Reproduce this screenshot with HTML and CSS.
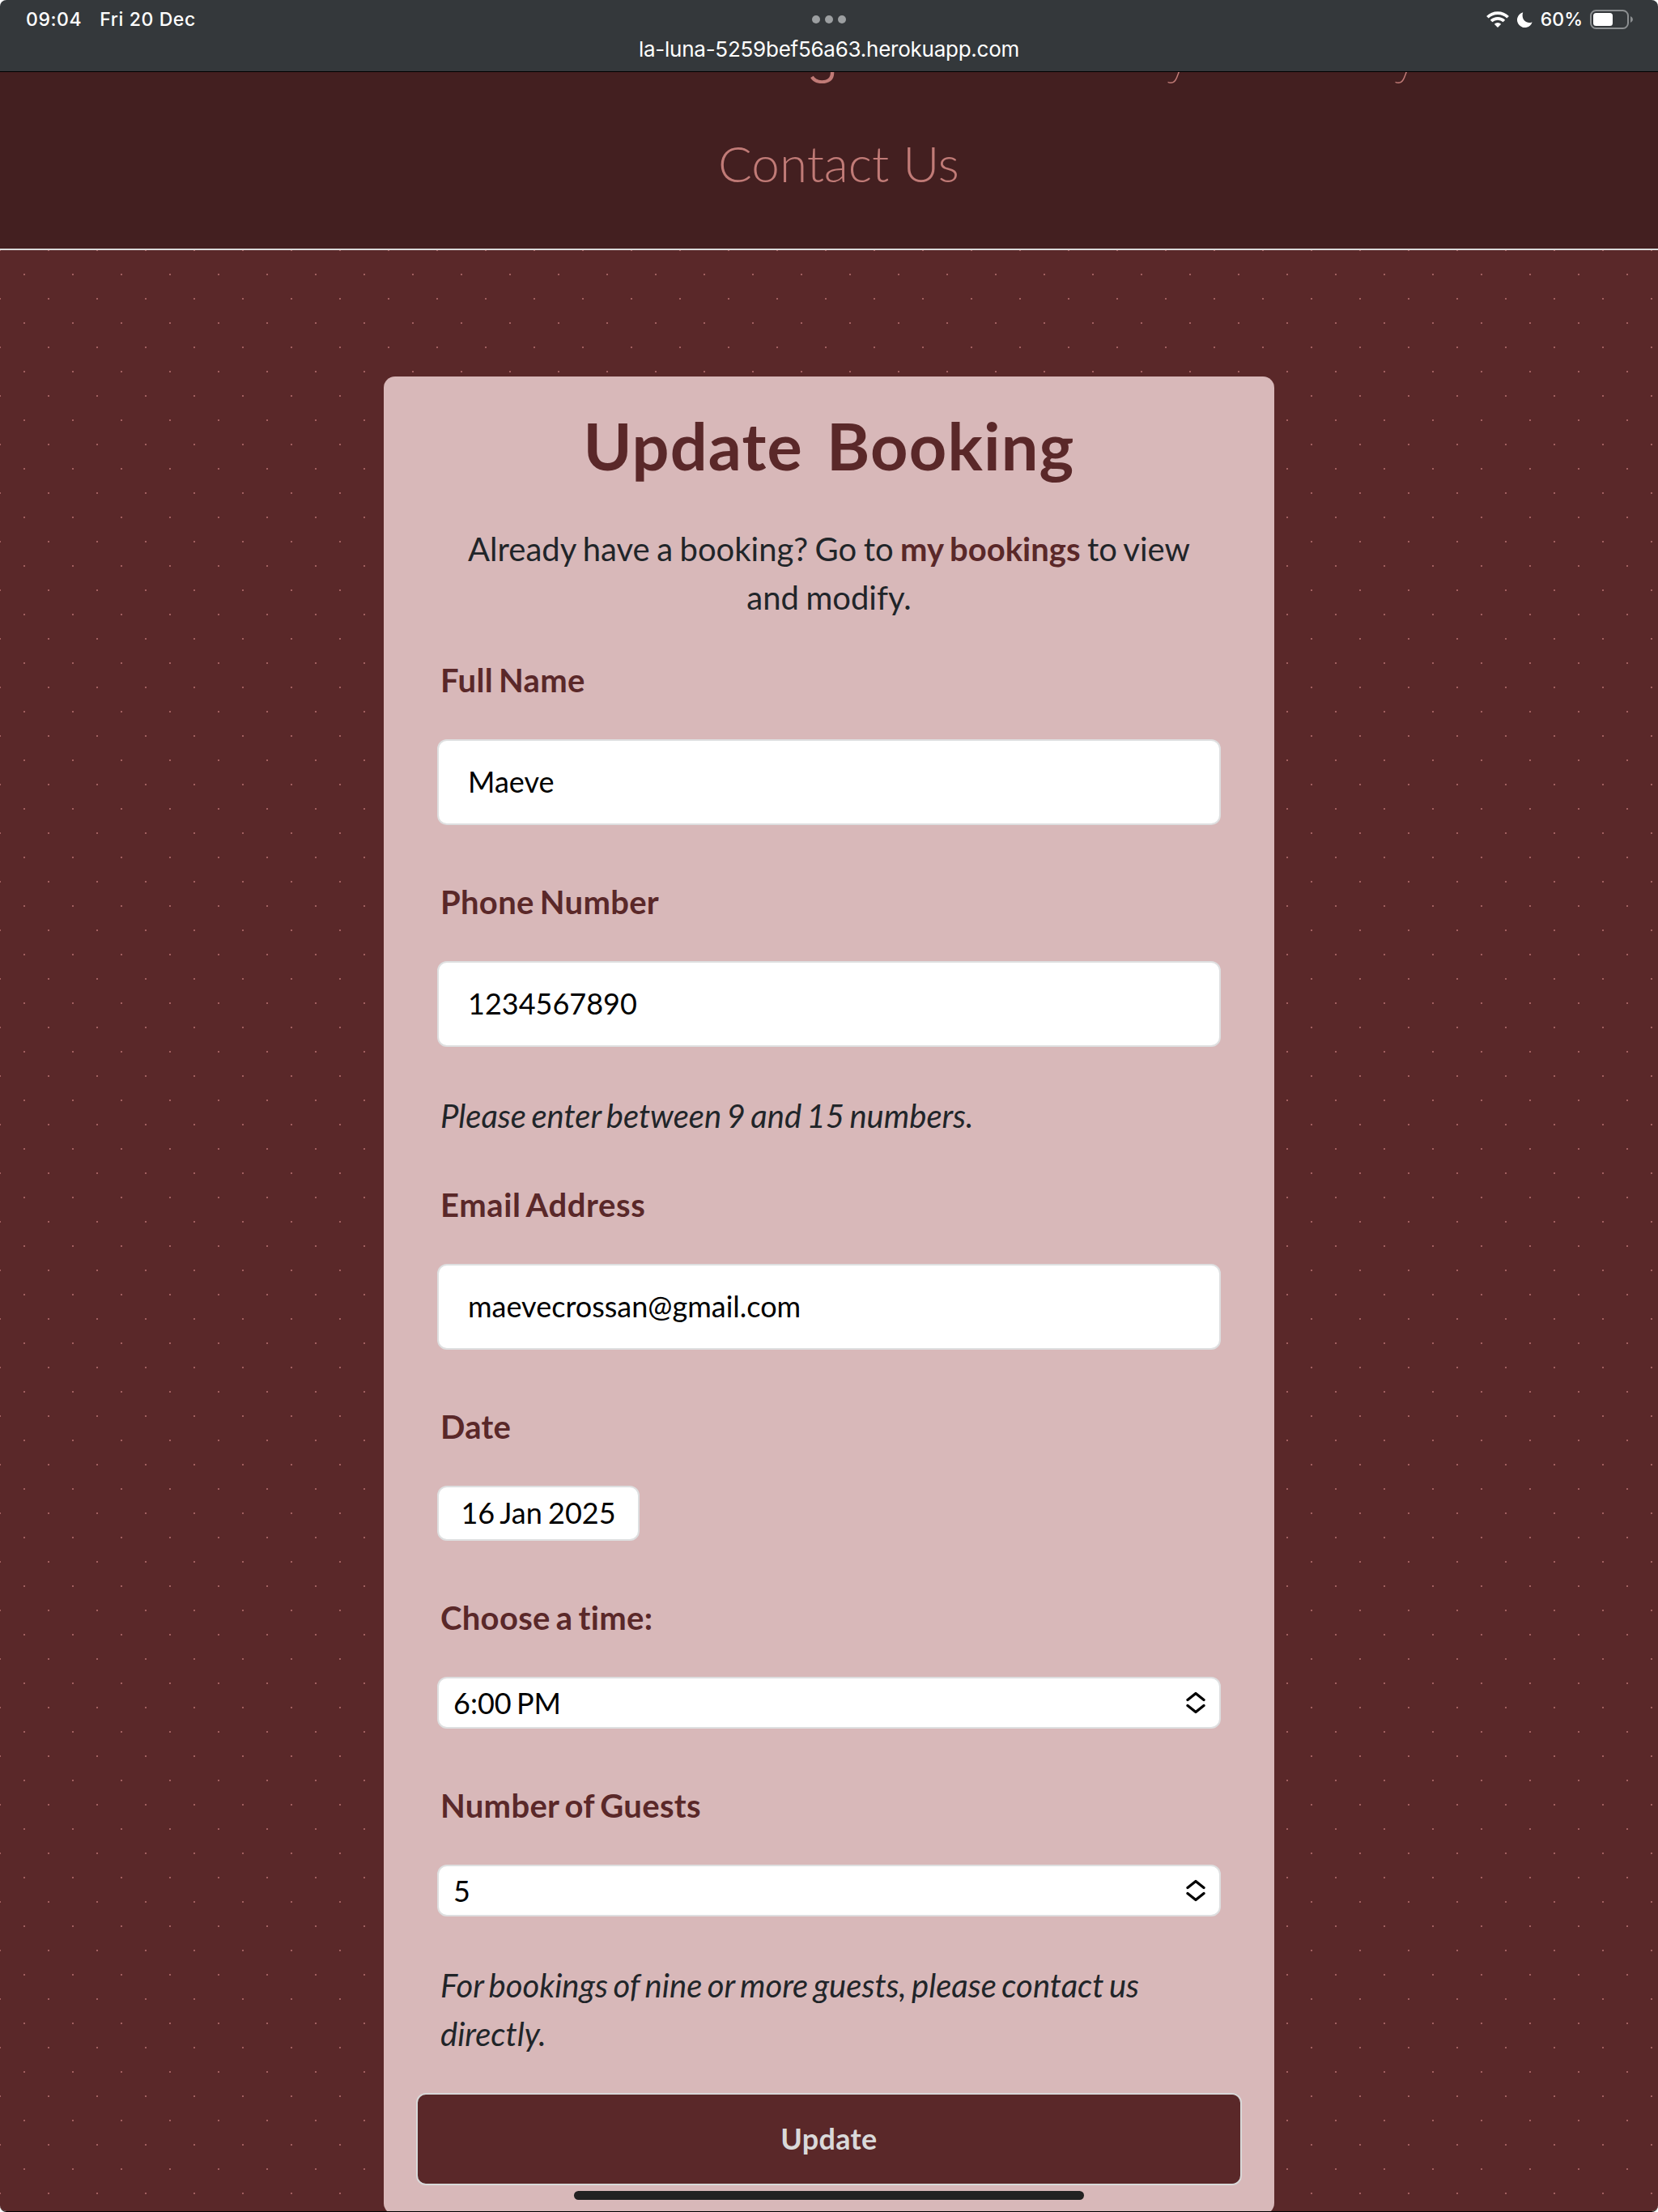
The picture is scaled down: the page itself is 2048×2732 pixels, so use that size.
FILE: index.html
```html
<!DOCTYPE html>
<html lang="en">
<head>
<meta charset="utf-8">
<title>Update Booking</title>
<link rel="stylesheet" href="styles.css">
</head>
<body>
<div class="screen">
  <div class="status">
    <div class="status-row">
      <div class="status-left"><span class="time">09:04</span><span class="day">Fri 20 Dec</span></div>
      <div class="dots"><i></i><i></i><i></i></div>
      <div class="status-right">
        <svg class="wifi" width="28" height="20" viewBox="0 0 28 20"><g fill="none" stroke="#fff" stroke-width="3.7"><path d="M1.4 7.2A18 18 0 0 1 26.6 7.2"/><path d="M6.1 12A11.3 11.3 0 0 1 21.9 12"/></g><path fill="#fff" d="M14 20l-4.200-4.300a6 6 0 0 1 8.400 0z"/></svg>
        <svg class="moon" width="19" height="19" viewBox="0 0 19 19"><path fill="#fff" d="M7.200.3A9.500 9.500 0 1 0 18.600 12.200C12 15.300 4.400 9.500 7.200.3z"/></svg>
        <span class="percent">60%</span>
        <svg class="battery" width="54" height="24" viewBox="0 0 54 24"><rect x="1" y="1" width="46" height="22" rx="6.500" fill="none" stroke="#8c8f91" stroke-width="2"/><rect x="4" y="4" width="24" height="16" rx="3.500" fill="#fff"/><path fill="#8c8f91" d="M50 8q3 1.300 3 4t-3 4z"/></svg>
      </div>
    </div>
    <div class="address">la-luna-5259bef56a63.herokuapp.com</div>
  </div>
  <header class="header">
    <nav class="nav-row"><span class="heavy">g</span><span>y</span><span>y</span></nav>
    <div class="contact">Contact Us</div>
  </header>
  <main class="main">
    <section class="card">
      <h1 class="title">Update Booking</h1>
      <p class="intro">Already have a booking? Go to <b>my bookings</b> to view and modify.</p>
      <div class="label">Full Name</div>
      <div class="input">Maeve</div>
      <div class="label next">Phone Number</div>
      <div class="input">1234567890</div>
      <p class="hint">Please enter between 9 and 15 numbers.</p>
      <div class="label after-hint">Email Address</div>
      <div class="input">maevecrossan@gmail.com</div>
      <div class="label next">Date</div>
      <div class="input date">16 Jan 2025</div>
      <div class="label next">Choose a time:</div>
      <div class="input select"><span>6:00 PM</span><svg width="24" height="28" viewBox="0 0 24 28"><path d="M2 10.500L12 2.500L22 10.500M2 17.500L12 25.500L22 17.500" fill="none" stroke="#000" stroke-width="3.300" stroke-linecap="round" stroke-linejoin="round"/></svg></div>
      <div class="label next">Number of Guests</div>
      <div class="input select"><span>5</span><svg width="24" height="28" viewBox="0 0 24 28"><path d="M2 10.500L12 2.500L22 10.500M2 17.500L12 25.500L22 17.500" fill="none" stroke="#000" stroke-width="3.300" stroke-linecap="round" stroke-linejoin="round"/></svg></div>
      <p class="hint">For bookings of nine or more guests, please contact us directly.</p>
      <div class="button">Update</div>
    </section>
  </main>
  <div class="home-bar"></div>
</div>
</body>
</html>
```
FILE: styles.css
```css
* { box-sizing: border-box; }
html { background: #fff; }
body { margin: 0; font-family: Lato, sans-serif; }
.screen {
  position: relative;
  display: flex;
  flex-direction: column;
  width: 2048px;
  height: 2732px;
  overflow: hidden;
  border-radius: 8px;
  border-bottom: 1px solid #000;
}
.status {
  flex: none;
  height: 89px;
  background: #34383b;
  border-bottom: 1px solid #000;
  color: #fff;
  font-family: Inter, sans-serif;
}
.status-row {
  display: grid;
  grid-template-columns: 1fr 42px 1fr;
  align-items: center;
  height: 48px;
  padding: 0 30px 0 32px;
  font-size: 23px;
  font-weight: 500;
}
.status-left { display: flex; gap: 22px; letter-spacing: 0.6px; }
.dots { display: flex; justify-content: space-between; transform: translateX(-1px); }
.dots i { width: 10px; height: 10px; border-radius: 50%; background: #9c9fa1; }
.status-right { display: flex; align-items: center; justify-content: flex-end; }
.moon { margin-left: 10px; }
.percent { margin: 0 9px 0 10px; }
.address {
  height: 26px;
  line-height: 26px;
  text-align: center;
  font-size: 26px;
  letter-spacing: -0.25px;
}
.header {
  flex: none;
  height: 220px;
  overflow: hidden;
  background: #431f20;
  border-bottom: 2px solid #d9d9d9;
  color: #c17b77;
}
.nav-row {
  display: flex;
  height: 60px;
  margin-top: -54px;
  padding-left: 996px;
  font: 100 66px/60px Inter, sans-serif;
}
.nav-row span { width: 281px; }
.nav-row .heavy { width: 442px; font-weight: 300; }
.contact {
  height: 76px;
  margin-top: 68px;
  padding-left: 24px;
  text-align: center;
  font-size: 62px;
  line-height: 76px;
  font-weight: 300;
}
.main {
  flex: 1;
  min-height: 0;
  padding-top: 156px;
  background-color: #5a2829;
  background-image:
    radial-gradient(circle at 30px 30px, #a15f5f 1px, transparent 1px),
    radial-gradient(circle at 30px 30px, #a15f5f 1px, transparent 1px);
  background-size: 60px 60px;
  background-position: 0 0, 30px 30px;
}
.card {
  width: 1100px;
  height: 2270px;
  margin: 0 auto;
  padding: 36px 66px 0;
  border-radius: 14px;
  background: #d8b8b9;
  color: #212529;
  font-size: 40px;
  line-height: 60px;
  word-spacing: -2.9px;
  font-variant-ligatures: none;
}
.title {
  margin: 0;
  color: #5a2829;
  text-align: center;
  font-size: 81px;
  line-height: 97px;
  font-weight: 700;
  letter-spacing: 1.2px;
  word-spacing: 8px;
}
.intro { margin: 50px 0 42px; padding: 0 30px; text-align: center; word-spacing: -1.8px; }
.intro b { color: #5a2829; }
.label {
  margin-bottom: 43px;
  padding-left: 4px;
  color: #5a2829;
  font-weight: 700;
  letter-spacing: 0.3px;
}
.next { margin-top: 65px; }
.hint { margin: 55px 0 43px; padding-left: 4px; font-style: italic; }
.after-hint { margin-top: 50px; letter-spacing: 0.6px; }
.input {
  display: flex;
  align-items: center;
  height: 106px;
  padding: 0 36px 2px;
  border: 2px solid #dedfe0;
  border-radius: 12px;
  background: #fff;
  color: #000;
  font-size: 36px;
  line-height: 44px;
}
.date { width: 250px; height: 68px; padding: 0 0 2px; justify-content: center; word-spacing: -2px; }
.select { height: 64px; justify-content: space-between; padding: 0 17px 0 18px; }
.button {
  height: 114px;
  margin: 0 -26px;
  border: 2px solid #d9d9d9;
  border-radius: 12px;
  background: #5a2829;
  color: #d9d9d9;
  text-align: center;
  font-size: 36px;
  line-height: 109px;
  font-weight: 700;
  letter-spacing: 0.3px;
}
.home-bar {
  position: absolute;
  left: 709px;
  top: 2706px;
  width: 630px;
  height: 11px;
  border-radius: 6px;
  background: #222;
}
```
